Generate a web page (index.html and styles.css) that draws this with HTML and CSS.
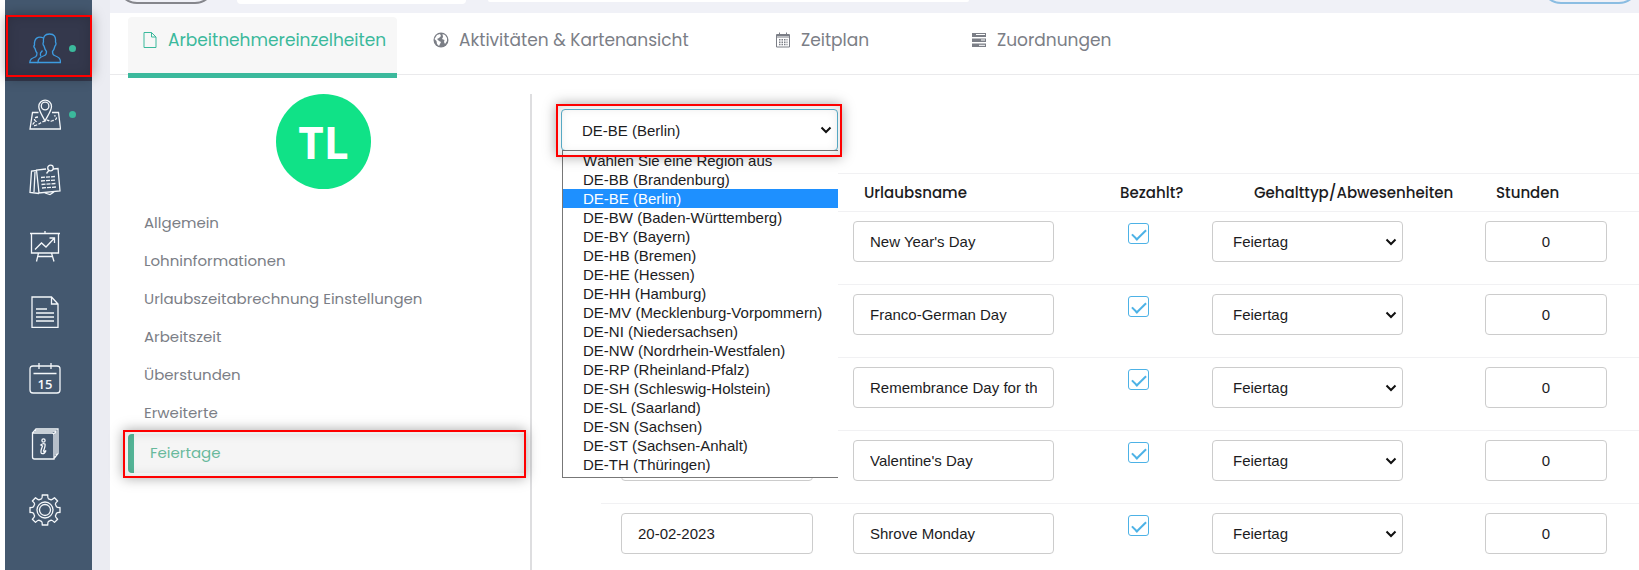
FILE: index.html
```html
<!DOCTYPE html>
<html lang="de">
<head>
    <meta charset="UTF-8">
    <meta name="viewport" content="width=device-width, initial-scale=1.0">
    <title>Feiertage</title>
    <link rel="stylesheet" href="styles.css">
</head>
<body>
    <nav class="sidebar" aria-label="Hauptmenü">
        <a href="#" class="side-item active marked" aria-label="Mitarbeiter">
            <svg class="side-icon" viewBox="0 0 32 32">
                <path d="M9 30.500H31.500C31.500 26.500 30 25.300 25.500 23.500C23.500 22.700 23.500 21.500 23.500 19.500C25 18 25.500 16 26 14C27.500 12.500 27 11 26.500 10C27 5 25.500 2 20.500 2S14 5 14.500 10C14 11 13.500 12.500 15 14C15.500 16 16 18 17.500 19.500C17.500 21.500 17.500 22.700 15.500 23.500C11 25.300 9 26.500 9 30.500Z" />
                <path d="M14.500 6C9 3.500 5 6.500 5.500 13C4.500 14 5 15.500 6 16.500C6.500 18.500 7 20 8 21C8 23 8 24 6.500 24.800C3 26.300 1 27 .800 30.500H9M12 24.500C11.300 23.500 11.300 22 11.500 21L13.500 18.500" />
            </svg>
            <span class="dot"></span>
        </a>
        <a href="#" class="side-item" aria-label="Karte">
            <svg class="side-icon" viewBox="0 0 32 32">
                <path d="M9.500 14.500H3.500L1 31H31.500L29.500 14.500H23M16 23C14 18.500 9.800 13 9.800 8.500A6.300 6.300 0 0 1 22.500 8.500C22.500 13 18 18.500 16 23Z" />
                <circle cx="16.100" cy="8" r="3.800" />
                <path stroke-dasharray="3 1.500" d="M9 19C4 19.500 5 22 7 23.500C3.500 25 3 28 6 27.500C11 26 12 24 17 22.500C21 21 19 25 24 22.500C29 22 28 17 25 18" />
            </svg>
            <span class="dot"></span>
        </a>
        <a href="#" class="side-item" aria-label="Notizen">
            <svg class="side-icon" viewBox="0 0 32 32">
                <path d="M17 5L7.500 6L10 29L31 27L29 4.500L24 5M7.500 6.500L2.500 7L1 28.500L10 29.500M6 8L5 28M16 29L21 30.500L25 28" />
                <circle cx="21.500" cy="4" r="2.800" />
                <path d="M19.800 6.500L17.500 9.500" />
                <path stroke-dasharray="4 1" d="M12 13.500L26 12.500M12 17L26.500 16M12.500 20.500L26.500 19.500M13 24L27 23" />
            </svg>
        </a>
        <a href="#" class="side-item" aria-label="Berichte">
            <svg class="side-icon" viewBox="0 0 32 32">
                <path d="M16 1V3M1 3.500H31M2.500 3.500V23H29.500V3.500M9.500 23L7.500 31.500M22.500 23L25 31.500M9 26.500H23M6 19.500L12.500 13L17 17L25.500 8M20.500 8H25.500V13" />
            </svg>
        </a>
        <a href="#" class="side-item" aria-label="Dokumente">
            <svg class="side-icon" viewBox="0 0 32 32">
                <path d="M3 1H22.500L29 8V31.500H3ZM22.500 1V8H29M7 13H18M7 17H25M7 21H25M7 25H25" />
            </svg>
        </a>
        <a href="#" class="side-item" aria-label="Kalender">
            <svg class="side-icon" viewBox="0 0 32 32">
                <path d="M8 4H4Q1 4 1 7V28Q1 31 4 31H28Q31 31 31 28V7Q31 4 28 4H24M8 4H24M4.500 11.500H27.500M10 1V7M22 1V7" />
                <text class="side-day" x="16" y="27" text-anchor="middle">15</text>
            </svg>
        </a>
        <a href="#" class="side-item" aria-label="Informationen">
            <svg class="side-icon" viewBox="0 0 32 32">
                <path d="M3.500 5L7 1H29V25.500L25 30.500M3.500 5H23Q25 5 25 7V31H5.500Q3.500 31 3.500 29ZM6 3H27V27M27 3L25 6" />
                <circle cx="14.500" cy="12.500" r="1.600" />
                <path d="M11.800 17Q14 15 16 16Q16.500 18 14.500 23Q15.500 24 17 22.500Q15.500 26.500 12.500 25.500Q11 24 13.500 18Z" />
            </svg>
        </a>
        <a href="#" class="side-item" aria-label="Einstellungen">
            <svg class="side-icon" viewBox="0 0 32 32">
                <path stroke-linejoin="round" d="M13.200 1H18.800Q18.600 4.300 19.600 4.800L22.200 5.900Q23.500 5.500 25.500 3.700L28.600 7Q26.200 9 26.400 10.200L27.500 12.700Q28.500 13.700 31 13.500V18.500Q28.500 18.300 27.500 19.300L26.400 21.900Q26.200 23 28.600 25.200L25.500 28.400Q23.500 26.300 22.200 26.200L19.600 27.300Q18.600 28 18.800 31H13.200Q13.400 28 12.400 27.300L9.800 26.200Q8.500 26.300 6.500 28.400L3.400 25.200Q5.800 23 5.600 21.900L4.500 19.300Q3.500 18.300 1 18.500V13.500Q3.500 13.700 4.500 12.700L5.600 10.200Q5.800 9 3.400 7L6.500 3.700Q8.500 5.500 9.800 5.900L12.400 4.800Q13.400 4.300 13.200 1Z" />
                <circle cx="16" cy="16" r="8" />
                <circle cx="16" cy="16" r="5.500" />
            </svg>
        </a>
    </nav>

    <main class="main">
        <div class="topbar">
            <span class="pill"></span>
            <span class="top-box"></span>
            <span class="top-box wide"></span>
            <span class="pill blue"></span>
        </div>

        <div class="panel">
            <nav class="tabs" aria-label="Bereiche">
                <a href="#" class="tab active">
                    <svg class="tab-icon" viewBox="0 0 16 16"><path fill="none" stroke="currentColor" d="M2 .500H9.500L14 5V15.500H2ZM9.500 .500V5H14" /></svg>
                    Arbeitnehmereinzelheiten
                </a>
                <a href="#" class="tab tab-activities">
                    <svg class="tab-icon" viewBox="0 0 16 16">
                        <circle cx="8" cy="8" r="7.500" fill="currentColor" />
                        <path fill="#fff" d="M4 3L7 2L8 4L6 6L4 7L6 9L8 10L6 14L4 12L3.500 9L1.500 7ZM9.500 2L12 3L14 6L14 9L12 12L11 10L11.500 8L9 7L10 5Z" />
                    </svg>
                    Aktivitäten &amp; Kartenansicht
                </a>
                <a href="#" class="tab tab-schedule">
                    <svg class="tab-icon" viewBox="0 0 16 16">
                        <path fill="none" stroke="currentColor" d="M1.500 2.500H14.500V15H1.500ZM1.500 5H14.500M4.500 .500V4M11.500 .500V4M1.500 3.500H14.500" />
                        <path fill="none" stroke="currentColor" stroke-width="1.500" stroke-dasharray="1.500 1" d="M4 7.800H12.500M4 10.200H12.500M4 12.600H12.500" />
                    </svg>
                    Zeitplan
                </a>
                <a href="#" class="tab">
                    <svg class="tab-icon" viewBox="0 0 16 16">
                        <path fill="currentColor" d="M1 1H15V5H1ZM1 6.500H15V10H1ZM1 11.500H15V15H1Z" />
                        <path stroke="#fff" d="M5 2.500H14M10 8H14M8 13.300H14" />
                    </svg>
                    Zuordnungen
                </a>
            </nav>

            <div class="content">
                <aside class="profile">
                    <div class="avatar">TL</div>
                    <nav class="menu" aria-label="Mitarbeiterdaten">
                        <a href="#">Allgemein</a>
                        <a href="#">Lohninformationen</a>
                        <a href="#">Urlaubszeitabrechnung Einstellungen</a>
                        <a href="#">Arbeitszeit</a>
                        <a href="#">Überstunden</a>
                        <a href="#">Erweiterte</a>
                        <a href="#" class="active marked">Feiertage</a>
                    </nav>
                </aside>

                <section class="holidays">
                    <div class="region marked">
                        <select class="field region-select" aria-label="Region">
                            <option>DE-BE (Berlin)</option>
                        </select>
                        <ul class="region-list" role="listbox" aria-label="Regionen">
                            <li role="option">Wählen Sie eine Region aus</li>
                            <li role="option">DE-BB (Brandenburg)</li>
                            <li role="option" class="selected" aria-selected="true">DE-BE (Berlin)</li>
                            <li role="option">DE-BW (Baden-Württemberg)</li>
                            <li role="option">DE-BY (Bayern)</li>
                            <li role="option">DE-HB (Bremen)</li>
                            <li role="option">DE-HE (Hessen)</li>
                            <li role="option">DE-HH (Hamburg)</li>
                            <li role="option">DE-MV (Mecklenburg-Vorpommern)</li>
                            <li role="option">DE-NI (Niedersachsen)</li>
                            <li role="option">DE-NW (Nordrhein-Westfalen)</li>
                            <li role="option">DE-RP (Rheinland-Pfalz)</li>
                            <li role="option">DE-SH (Schleswig-Holstein)</li>
                            <li role="option">DE-SL (Saarland)</li>
                            <li role="option">DE-SN (Sachsen)</li>
                            <li role="option">DE-ST (Sachsen-Anhalt)</li>
                            <li role="option">DE-TH (Thüringen)</li>
                        </ul>
                    </div>

                    <table class="holiday-table">
                        <thead>
                            <tr>
                                <th class="date" aria-label="Datum"></th>
                                <th class="name">Urlaubsname</th>
                                <th class="paid">Bezahlt?</th>
                                <th class="type">Gehalttyp/Abwesenheiten</th>
                                <th class="hours">Stunden</th>
                            </tr>
                        </thead>
                        <tbody>
                            <tr>
                                <td class="date"><input class="field" type="text" aria-label="Datum"></td>
                                <td class="name"><input class="field" type="text" value="New Year's Day" aria-label="Urlaubsname"></td>
                                <td class="paid"><input class="check" type="checkbox" checked aria-label="Bezahlt?"></td>
                                <td class="type"><select class="field" aria-label="Gehalttyp"><option>Feiertag</option></select></td>
                                <td class="hours"><input class="field" type="text" value="0" aria-label="Stunden"></td>
                            </tr>
                            <tr>
                                <td class="date"><input class="field" type="text" aria-label="Datum"></td>
                                <td class="name"><input class="field" type="text" value="Franco-German Day" aria-label="Urlaubsname"></td>
                                <td class="paid"><input class="check" type="checkbox" checked aria-label="Bezahlt?"></td>
                                <td class="type"><select class="field" aria-label="Gehalttyp"><option>Feiertag</option></select></td>
                                <td class="hours"><input class="field" type="text" value="0" aria-label="Stunden"></td>
                            </tr>
                            <tr>
                                <td class="date"><input class="field" type="text" aria-label="Datum"></td>
                                <td class="name"><input class="field" type="text" value="Remembrance Day for the" aria-label="Urlaubsname"></td>
                                <td class="paid"><input class="check" type="checkbox" checked aria-label="Bezahlt?"></td>
                                <td class="type"><select class="field" aria-label="Gehalttyp"><option>Feiertag</option></select></td>
                                <td class="hours"><input class="field" type="text" value="0" aria-label="Stunden"></td>
                            </tr>
                            <tr>
                                <td class="date"><input class="field" type="text" aria-label="Datum"></td>
                                <td class="name"><input class="field" type="text" value="Valentine's Day" aria-label="Urlaubsname"></td>
                                <td class="paid"><input class="check" type="checkbox" checked aria-label="Bezahlt?"></td>
                                <td class="type"><select class="field" aria-label="Gehalttyp"><option>Feiertag</option></select></td>
                                <td class="hours"><input class="field" type="text" value="0" aria-label="Stunden"></td>
                            </tr>
                            <tr>
                                <td class="date"><input class="field" type="text" value="20-02-2023" aria-label="Datum"></td>
                                <td class="name"><input class="field" type="text" value="Shrove Monday" aria-label="Urlaubsname"></td>
                                <td class="paid"><input class="check" type="checkbox" checked aria-label="Bezahlt?"></td>
                                <td class="type"><select class="field" aria-label="Gehalttyp"><option>Feiertag</option></select></td>
                                <td class="hours"><input class="field" type="text" value="0" aria-label="Stunden"></td>
                            </tr>
                        </tbody>
                    </table>
                </section>
            </div>
        </div>
    </main>
</body>
</html>
```
FILE: styles.css
```css
:root {
    --sidebar: #44586f;
    --green: #3bb99c;
    --blue: #4db2e6;
    --text: #7b7e86;
    --line: #f1f1f3;
}
* {
    box-sizing: border-box;
}
body {
    display: flex;
    min-height: 100vh;
    margin: 0;
    padding-left: 5px;
    overflow: hidden;
    background-color: white;
    font-family: Poppins, Inter, sans-serif;
    font-size: 15px;
    color: var(--text);
}
a {
    color: inherit;
    text-decoration: none;
}

/* red frame with a soft shadow */
.marked {
    position: relative;
}
.marked::after {
    content: "";
    position: absolute;
    z-index: 3;
    border: 2px solid #fe0000;
    box-shadow: 0 0 12px rgba(0, 0, 0, 0.35), inset 0 0 12px rgba(0, 0, 0, 0.15);
    pointer-events: none;
}

.sidebar {
    flex: none;
    width: 87px;
    padding-top: 15px;
    background-color: var(--sidebar);
}
.side-item {
    position: relative;
    display: flex;
    align-items: center;
    height: 66px;
    padding-left: 24px;
}
.side-item.active {
    background-color: #34384c;
}
.side-item.marked::after {
    inset: 0 0 4px 1px;
}
.side-icon {
    width: 32px;
    height: 32px;
    fill: none;
    stroke: #f4f7fa;
    stroke-width: 1.3;
}
.side-item.active .side-icon {
    stroke: #3d9be0;
}
.side-day {
    fill: #f4f7fa;
    stroke: none;
    font-family: "Open Sans", sans-serif;
    font-size: 13px;
    font-weight: 600;
}
.dot {
    width: 7px;
    height: 7px;
    margin-left: 8px;
    border-radius: 50%;
    background-color: var(--green);
}

.main {
    flex: 1;
    display: flex;
    flex-direction: column;
    min-width: 0;
    padding-left: 18px;
    background-color: #ebecf2;
}
.topbar {
    display: flex;
    align-items: flex-start;
    height: 13px;
    padding-left: 7px;
    background-color: #f0f1f7;
}
.pill {
    width: 98px;
    height: 40px;
    margin-top: -36px;
    border: 2px solid #85868c;
    border-radius: 20px;
}
.pill.blue {
    margin-left: auto;
    border-color: #8bbde2;
}
.top-box {
    width: 229px;
    height: 4px;
    margin-left: 22px;
    border-radius: 0 0 4px 4px;
    background-color: white;
}
.top-box.wide {
    width: 481px;
    height: 2px;
}
.panel {
    flex: 1;
    background-color: white;
}

.tabs {
    display: flex;
    gap: 22px;
    height: 62px;
    padding: 4px 18px 0;
    border-bottom: 1px solid #eaeaec;
}
.tab {
    display: flex;
    align-items: flex-start;
    gap: 10px;
    height: 61px;
    padding: 11px 12px 0 14px;
    font-size: 17px;
    line-height: 24px;
    white-space: nowrap;
}
.tab.active {
    width: 269px;
    border-bottom: 5px solid var(--green);
    border-radius: 4px 4px 0 0;
    background-color: #f7f7f7;
    color: var(--green);
}
.tab-activities {
    width: 320px;
}
.tab-schedule {
    width: 174px;
}
.tab-icon {
    flex: none;
    width: 16px;
    height: 16px;
    margin-top: 4px;
}

.content {
    display: flex;
    padding-top: 19px;
}
.profile {
    flex: none;
    width: 422px;
    min-height: 476px;
    padding: 0 6px 0 18px;
    border-right: 2px solid #dedee0;
}
.avatar {
    display: flex;
    align-items: center;
    justify-content: center;
    width: 95px;
    height: 95px;
    margin-left: 148px;
    border-radius: 50%;
    background-color: #10e287;
    color: white;
    font-family: "Open Sans", sans-serif;
    font-size: 44px;
    font-weight: 700;
}
.menu {
    margin-top: 15px;
}
.menu a {
    display: block;
    height: 38px;
    padding-left: 16px;
    line-height: 38px;
}
.menu a.active {
    height: 39px;
    margin-top: 2px;
    border-left: 6px solid #54b698;
    border-radius: 4px 0 0 4px;
    background-color: #f5f5f5;
    color: #68b99c;
}
.menu .marked::after {
    inset: -4px -2px -5px -11px;
}

.holidays {
    flex: 1;
    min-width: 0;
    padding: 15px 0 0 29px;
}
.region {
    width: 277px;
}
.region.marked::after {
    inset: -5px -4px -6px -5px;
}
.field {
    display: block;
    width: 100%;
    height: 41px;
    padding: 0 16px;
    border: 1px solid #ccc;
    border-radius: 4px;
    background-color: white;
    color: #1c1c1e;
    font-family: Arial, "Liberation Sans", sans-serif;
    font-size: 15px;
}
select.field {
    appearance: none;
    padding-left: 20px;
    background-image: url("data:image/svg+xml,%3Csvg xmlns='http://www.w3.org/2000/svg' viewBox='0 0 12 8'%3E%3Cpath d='M1.500 1.500L6 6L10.500 1.500' fill='none' stroke='%23111' stroke-width='2'/%3E%3C/svg%3E");
    background-position: right 5px center;
    background-repeat: no-repeat;
    background-size: 12px 8px;
}
.region-select {
    height: 42px;
    border-color: #5ab0cc;
}
.region-list {
    position: absolute;
    z-index: 2;
    top: 41px;
    left: 1px;
    right: 0;
    margin: 0;
    padding: 0 0 3px;
    border: 1px solid #777;
    border-right: none;
    background-color: white;
    color: #1c1c1e;
    font-family: Arial, "Liberation Sans", sans-serif;
    list-style: none;
}
.region-list li {
    padding-left: 20px;
    line-height: 19px;
    white-space: nowrap;
}
.region-list .selected {
    background-color: #1e90ff;
    color: white;
}

.holiday-table {
    width: calc(100% - 40px);
    margin: 22px 0 0 40px;
    border-collapse: collapse;
    table-layout: fixed;
}
.holiday-table tr {
    border-top: 1px solid var(--line);
}
.holiday-table th {
    height: 38px;
    padding: 0;
    color: #1c1c1e;
    font-weight: 500;
    text-align: left;
    white-space: nowrap;
}
.holiday-table td {
    height: 73px;
    padding: 9px 20px 0;
    vertical-align: top;
}
.date {
    width: 232px;
}
.paid {
    width: 100px;
}
.type {
    width: 273px;
}
.hours {
    width: 174px;
}
.holiday-table td.name {
    padding-right: 38px;
}
.holiday-table td.paid {
    padding-left: 36px;
}
.holiday-table td.type {
    padding-right: 62px;
}
.holiday-table td.hours {
    padding-right: 32px;
}
.holiday-table th.name,
.holiday-table th.hours {
    padding-left: 31px;
}
.holiday-table th.paid {
    padding-left: 28px;
}
.holiday-table th.type {
    padding-left: 62px;
}
.hours .field {
    text-align: center;
}
.check {
    appearance: none;
    display: flex;
    justify-content: center;
    width: 21px;
    height: 21px;
    margin: 2px 0 0;
    border: 1px solid var(--blue);
    border-radius: 3px;
    background-color: white;
}
.check:checked::after {
    content: "";
    width: 6px;
    height: 12px;
    margin-top: 2px;
    border: solid var(--blue);
    border-width: 0 2px 2px 0;
    transform: rotate(45deg);
}
```
